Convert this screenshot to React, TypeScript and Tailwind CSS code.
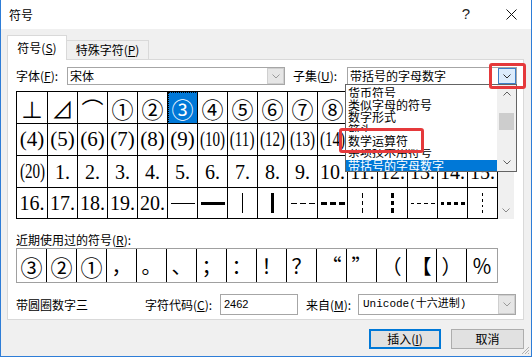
import React from 'react'

const gridRows: string[][] = [
  ['⊥', '⊿', '⌒', '①', '②', '③', '④', '⑤', '⑥', '⑦', '⑧', '⑨', '⑩', '⑴', '⑵', '⑶'],
  ['(4)', '(5)', '(6)', '(7)', '(8)', '(9)', '(10)', '(11)', '(12)', '(13)', '(14)', '(15)', '(16)', '(17)', '(18)', '(19)'],
  ['(20)', '1.', '2.', '3.', '4.', '5.', '6.', '7.', '8.', '9.', '10.', '11.', '12.', '13.', '14.', '15.'],
  ['16.', '17.', '18.', '19.', '20.', 'h1', 'h3', 'v1', 'v3', 'h1-3', 'h3-3', 'v1-3', 'v3-3', 'h1-4', 'h3-4', 'v1-4'],
]

const rowHeights = ['h-[32px]', 'h-[32px]', 'h-[32px]', 'h-[31px]']

const recent = ['③', '②', '①', '，', '。', '、', '；', '：', '！', '？', '“', '”', '（', '【', '）', '％']

// the open list is caught mid-redraw, so rows overlap like in the capture
const listItems = [
  { text: '货币符号', box: 'h-[13px] pt-[2px]' },
  { text: '类似字母的符号', box: 'h-[13px] pt-[1px]' },
  { text: '数字形式', box: 'h-[12px]' },
  { text: '箭头', box: 'h-[9px] pt-[1px]' },
  { text: '数学运算符', box: 'h-[17px] pt-[3px]' },
  { text: '杂项技术用符号', box: 'h-[11px] [&>span]:-mt-[3px]' },
]

function Chevron({ up = false, color = '#606060' }: { up?: boolean; color?: string }) {
  return (
    <svg width="8" height="5" viewBox="0 0 8 5">
      <path d={up ? 'M0.5 4.5 L4 1 L7.5 4.5' : 'M0.5 0.5 L4 4 L7.5 0.5'} fill="none" stroke={color} strokeWidth="1" />
    </svg>
  )
}

// box drawing cells: h/v, weight, number of dashes
function LineGlyph({ code }: { code: string }) {
  const [kind, segs] = code.split('-')
  const dir = kind[0]
  const heavy = kind[1] === '3'
  const n = segs ? Number(segs) : 1
  const parts = Array.from({ length: n })
  if (dir === 'h') {
    return (
      <div className="flex w-[24px] gap-[3px]">
        {parts.map((_, i) => (
          <div key={i} className={`flex-1 bg-black ${heavy ? 'h-[3px]' : 'h-[1px]'}`} />
        ))}
      </div>
    )
  }
  return (
    <div className="flex flex-col h-[20px] gap-[3px]">
      {parts.map((_, i) => (
        <div key={i} className={`flex-1 bg-black ${heavy ? 'w-[3px]' : 'w-[1px]'}`} />
      ))}
    </div>
  )
}

function GridCell({ value, row, col }: { value: string; row: number; col: number }) {
  const selected = row === 0 && col === 5
  let content: React.ReactNode
  if (row === 3 && col >= 5) {
    content = <LineGlyph code={value} />
  } else if (row === 0) {
    content = <span className="text-[22px] leading-none font-['Noto_Sans_CJK_SC',serif]">{value}</span>
  } else {
    const squeeze = (row === 1 && col >= 6) || (row === 2 && col === 0)
    content = (
      <span
        className={`leading-none font-['Liberation_Serif',serif] ${row === 1 || (row === 2 && col === 0) ? 'text-[21px]' : 'text-[20px]'} ${squeeze ? 'scale-x-[0.72]' : ''} inline-block whitespace-nowrap`}
      >
        {value}
      </span>
    )
  }
  return (
    <div
      className={`flex items-center justify-center border-r border-b border-black ${rowHeights[row]} ${
        selected ? 'bg-[#0078d7] text-white outline-1 outline-dotted outline-black outline-offset-[-1px]' : 'bg-white text-black'
      }`}
    >
      {content}
    </div>
  )
}

export default function App() {
  return (
    <div className="relative w-[532px] h-[357px] overflow-hidden bg-[#f0f0f0] border-x border-b border-[#2e7dd7] font-['Noto_Sans_CJK_SC',sans-serif] text-[12px] text-black flex flex-col">
      {/* Title bar */}
      <div className="h-[29px] shrink-0 bg-white flex items-center pl-[8px]">
        <span className="text-[12px]">符号</span>
        <span className="ml-auto text-[15px] font-['Liberation_Sans',sans-serif] text-[#222]">?</span>
        <svg className="ml-[36px] mr-[14px]" width="11" height="11" viewBox="0 0 11 11">
          <path d="M0.5 0.5 L10.5 10.5 M10.5 0.5 L0.5 10.5" stroke="#111" strokeWidth="1" />
        </svg>
      </div>

      {/* Tabs */}
      <div className="relative z-10 flex items-end pl-[6px] pt-[6px] h-[31px] shrink-0">
        <div className="w-[60px] h-[25px] bg-white border-x border-t border-[#d9d9d9] flex items-center justify-center">
          符号(<u>S</u>)
        </div>
        <div className="w-[82px] h-[20px] bg-[#f0f0f0] border border-l-0 border-[#d9d9d9] flex items-center justify-center">
          特殊字符(<u>P</u>)
        </div>
      </div>

      {/* Tab panel */}
      <div className="ml-[6px] -mt-px w-[517px] h-[261px] shrink-0 border border-[#d9d9d9] bg-white pt-[7px] pl-[8px]">
        <div className="flex items-center h-[18px]">
          <span className="w-[51px]">字体(<u>F</u>):</span>
          <div className="w-[218px] h-[18px] border border-[#a6a6a6] bg-white flex items-stretch">
            <span className="flex-1 pl-[2px] leading-[16px]">宋体</span>
            <div className="w-[17px] border border-[#cfcfcf] bg-[#e6e6e6] flex items-center justify-center">
              <Chevron color="#9a9a9a" />
            </div>
          </div>
          <span className="ml-[8px] w-[54px]">子集(<u>U</u>):</span>
          <div className="w-[170px] h-[18px] border border-[#a6a6a6] bg-white flex items-stretch">
            <span className="flex-1 pl-[2px] leading-[16px]">带括号的字母数字</span>
            <div className="w-[18px] border border-[#3c7fc8] bg-[#dcecfc] flex items-center justify-center">
              <Chevron color="#303030" />
            </div>
          </div>
        </div>

        {/* Symbol grid */}
        <div className="mt-[6px] flex">
          <div className="w-[482px] grid grid-cols-[31px_repeat(15,30px)] border-l border-t border-black">
            {gridRows.map((row, r) => row.map((v, c) => <GridCell key={`${r}-${c}`} value={v} row={r} col={c} />))}
          </div>
          <div className="w-[16px] h-[128px] bg-[#f0f0f0] flex flex-col justify-between">
            <div className="h-[17px] flex items-center justify-center">
              <Chevron up />
            </div>
            <div className="h-[17px] flex items-center justify-center">
              <Chevron color="#8a8a8a" />
            </div>
          </div>
        </div>

        <div className="mt-[13px] leading-[16px]">
          近期使用过的符号(<u>R</u>):
        </div>
        <div className="w-[482px] h-[35px] grid grid-cols-16 border border-[#a0a0a0]">
          {recent.map((s, i) => (
            <div
              key={i}
              className={`flex items-center justify-center leading-none ${i < 3 ? 'text-[22px]' : 'text-[20px]'} ${
                i < 15 ? 'border-r border-black' : ''
              }`}
            >
              {s}
            </div>
          ))}
        </div>

        <div className="mt-[11px] flex items-center h-[21px]">
          <span className="w-[129px]">带圆圈数字三</span>
          <span className="w-[75px]">字符代码(<u>C</u>):</span>
          <div className="w-[78px] h-[21px] border border-[#a6a6a6] bg-white pl-[3px] flex items-center text-[11px] font-['Liberation_Sans',sans-serif]">
            2462
          </div>
          <span className="ml-[8px] w-[52px]">来自(<u>M</u>):</span>
          <div className="w-[158px] h-[21px] border border-[#a6a6a6] bg-white flex items-stretch">
            <span className="flex-1 pl-[4px] flex items-center text-[11px] font-['Liberation_Mono','Noto_Sans_CJK_SC',monospace]">
              Unicode(十六进制)
            </span>
            <div className="w-[17px] border border-[#cfcfcf] bg-[#e6e6e6] flex items-center justify-center">
              <Chevron color="#9a9a9a" />
            </div>
          </div>
        </div>
      </div>

      {/* Buttons */}
      <div className="mt-[9px] flex justify-end gap-[10px] pr-[7px]">
        <button className="w-[72px] h-[20px] border-2 border-[#0078d7] bg-[#e1e1e1] flex items-center justify-center">
          插入(<u>I</u>)
        </button>
        <button className="w-[73px] h-[20px] border border-[#adadad] bg-[#e1e1e1] flex items-center justify-center">
          取消
        </button>
      </div>

      {/* Open subset dropdown */}
      <div className="absolute left-[344px] top-[84px] w-[172px] h-[88px] bg-white border border-[#646464] flex z-20">
        <div className="flex-1 flex flex-col overflow-hidden">
          {listItems.map((it, i) => (
            <div key={i} className={`shrink-0 overflow-hidden pl-[2px] leading-[12px] ${it.box}`}>
              <span className="block">{it.text}</span>
            </div>
          ))}
          <div className="shrink-0 h-[12px] bg-[#0078d7] text-white pl-[2px] leading-[12px]">带括号的字母数字</div>
        </div>
        <div className="w-[19px] bg-[#f0f0f0] flex flex-col items-center">
          <div className="h-[17px] flex items-center">
            <Chevron up />
          </div>
          <div className="mt-[11px] w-[15px] h-[17px] bg-[#cdcdcd]" />
          <div className="mt-auto h-[17px] flex items-center">
            <Chevron />
          </div>
        </div>
      </div>

      {/* Annotation boxes */}
      <div className="absolute left-[488px] top-[63px] w-[37px] h-[26px] border-[3px] border-[#e5393b] rounded-[3px] z-30" />
      <div className="absolute left-[338px] top-[128px] w-[85px] h-[25px] border-[3px] border-[#e5393b] rounded-[3px] z-30" />

      {/* Resize grip */}
      <svg className="absolute right-[1px] bottom-[1px]" width="9" height="9" viewBox="0 0 9 9">
        <path d="M8 1 L1 8 M8 4 L4 8 M8 7 L7 8" stroke="#b0b0b0" strokeWidth="1" />
      </svg>
    </div>
  )
}
